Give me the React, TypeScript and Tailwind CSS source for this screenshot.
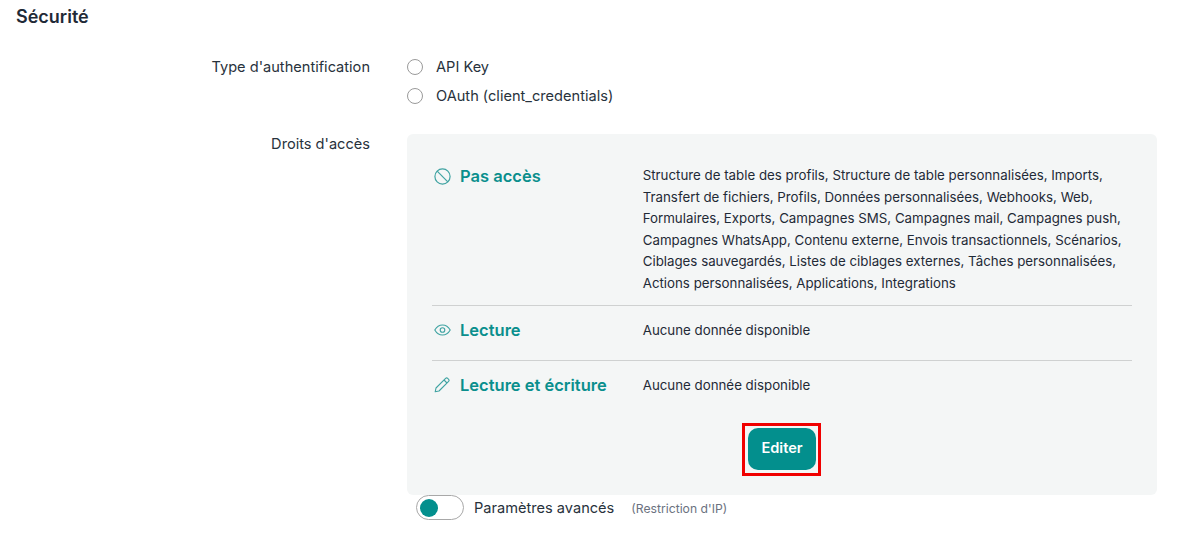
const font = { fontFamily: '"Inter", "Liberation Sans", sans-serif' };

function Radio({ label }: { label: string }) {
  return (
    <div className="flex h-[29px] items-center">
      <span className="h-4 w-4 rounded-full border border-[#9a9a9a] bg-white" />
      <span className="ml-[13px] pt-[2px] text-[14.6px] text-[#28323c]">{label}</span>
    </div>
  );
}

function BanIcon() {
  return (
    <svg width="17" height="17" viewBox="0 0 17 17" fill="none" stroke="#3fa3a2" strokeWidth="1.2">
      <circle cx="8.5" cy="8.5" r="7.6" />
      <path d="M3.2 3.2 13.8 13.8" />
    </svg>
  );
}

function EyeIcon() {
  return (
    <svg width="17" height="12" viewBox="0 0 17 12" fill="none" stroke="#3fa3a2" strokeWidth="1.1">
      <path d="M.8 6C2.6 2.8 5.3 1 8.5 1s5.9 1.8 7.7 5c-1.8 3.2-4.5 5-7.7 5S2.6 9.2.8 6Z" />
      <circle cx="8.5" cy="6" r="2.3" />
    </svg>
  );
}

function PenIcon() {
  return (
    <svg width="16" height="16" viewBox="0 0 16 16" fill="none" stroke="#3fa3a2" strokeWidth="1.1" strokeLinejoin="round">
      <path d="M1.2 14.8 2 11 11.6 1.4a1.5 1.5 0 0 1 2.1 0l.9.9a1.5 1.5 0 0 1 0 2.1L5 14Z" />
      <path d="M10 3l3 3" />
    </svg>
  );
}

function AccessRow({ icon, title, children, className, titleClass = '' }: { icon: React.ReactNode; title: string; children: React.ReactNode; className: string; titleClass?: string }) {
  return (
    <div className={`flex ${className}`}>
      <div className={`flex w-[211px] items-start ${titleClass}`}>
        <span className="flex h-[22px] w-[28px] shrink-0 items-center pl-[2px]">{icon}</span>
        <span className="text-[16.5px] leading-[22px] font-semibold text-[#0a8f8d]">{title}</span>
      </div>
      <div className="w-[490px] text-[13.3px] leading-[21.6px] text-[#1f2a37]">{children}</div>
    </div>
  );
}

export default function App() {
  return (
    <div className="h-[538px] w-[1195px] overflow-hidden bg-white" style={font}>
      <h2 className="pt-[6px] pl-4 text-[18px] leading-[22px] font-semibold text-[#1f2a37]">Sécurité</h2>

      <div className="mt-[24px] flex">
        <div className="w-[370px] pt-[5px] text-right text-[14.6px] leading-[20px] text-[#28323c]">Type d'authentification</div>
        <div className="ml-[37px]">
          <Radio label="API Key" />
          <Radio label="OAuth (client_credentials)" />
        </div>
      </div>

      <div className="mt-[24px] flex">
        <div className="w-[370px] text-right text-[14.6px] leading-[20px] text-[#28323c]">Droits d'accès</div>
        <div className="ml-[37px]">
          <div className="h-[361px] w-[750px] rounded-md bg-[#f4f6f6] px-[25px] pt-[31px]">
            <AccessRow icon={<BanIcon />} title="Pas accès" className="h-[141px] border-b border-[#cfd1d1]">
              Structure de table des profils, Structure de table personnalisées, Imports,
              <br />
              Transfert de fichiers, Profils, Données personnalisées, Webhooks, Web,
              <br />
              Formulaires, Exports, Campagnes SMS, Campagnes mail, Campagnes push,
              <br />
              Campagnes WhatsApp, Contenu externe, Envois transactionnels, Scénarios,
              <br />
              Ciblages sauvegardés, Listes de ciblages externes, Tâches personnalisées,
              <br />
              Actions personnalisées, Applications, Integrations
            </AccessRow>
            <AccessRow icon={<EyeIcon />} title="Lecture" className="h-[55px] items-center border-b border-[#cfd1d1] pb-[5px]" titleClass="pb-[1px]">
              Aucune donnée disponible
            </AccessRow>
            <AccessRow icon={<PenIcon />} title="Lecture et écriture" className="h-[55px] items-center pb-[6px]" titleClass="pb-[1px]">
              Aucune donnée disponible
            </AccessRow>
            <div className="mt-[7px] mr-[1px] flex justify-center">
              <div className="border-[3px] border-[#f00000] pt-[2px] pr-[2px] pb-[3px] pl-[3px]">
                <button className="block h-[42px] w-[68px] rounded-[10px] bg-[#038f8d] text-[14.6px] font-semibold text-white">Editer</button>
              </div>
            </div>
          </div>
          <div className="flex h-[25px] items-center pl-[9px]">
            <span className="flex h-[25px] w-[48px] items-center rounded-full border border-[#a8a8a8] bg-white pl-[3px]">
              <span className="h-[18px] w-[18px] rounded-full bg-[#038f8d]" />
            </span>
            <span className="ml-[10px] pt-[2px] text-[14.6px] text-[#28323c]">Paramètres avancés</span>
            <span className="ml-[17px] pt-[4px] text-[12.2px] text-[#6b7280]">(Restriction d'IP)</span>
          </div>
        </div>
      </div>
    </div>
  );
}
